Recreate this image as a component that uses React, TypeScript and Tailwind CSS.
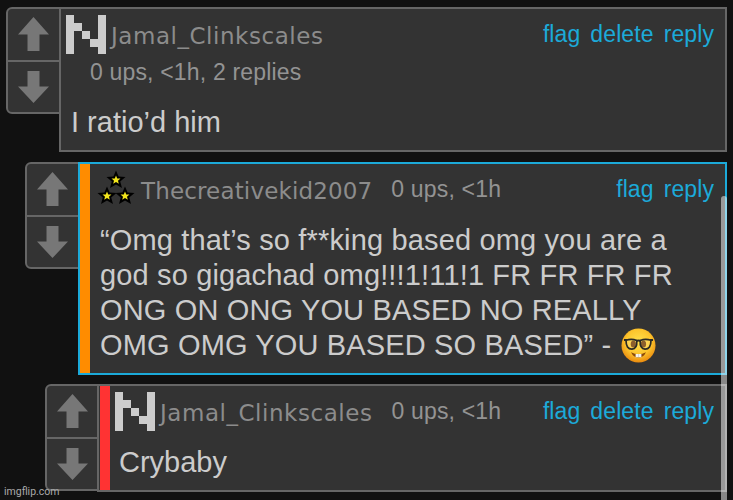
import type { ReactNode } from 'react';
import clsx from 'clsx';

const ARROW = 'M15.5 0 L31 17.5 H21.5 V34 H9.5 V17.5 H0 Z';

function VoteBox() {
  return (
    <div className="-mr-0.5 h-[107px] w-[55px] shrink-0 rounded-l-md border-2 border-[#666] bg-[#333]">
      <button className="flex h-[53px] w-full justify-center border-b-2 border-[#666] pt-2">
        <svg width="31" height="34" viewBox="0 0 31 34" fill="#777">
          <path d={ARROW} />
        </svg>
      </button>
      <button className="flex h-[50px] w-full justify-center pt-[9px]">
        <svg className="rotate-180" width="31" height="32" viewBox="0 0 31 34" preserveAspectRatio="none" fill="#777">
          <path d={ARROW} />
        </svg>
      </button>
    </div>
  );
}

function PixelIcon() {
  return (
    <svg width="40" height="39" viewBox="0 0 40 39" fill="#ccc" shapeRendering="crispEdges" className="shrink-0">
      <path d="M0 0H8V8H16V16H24V24H32V0H40V39H32V32H24V24H16V16H8V39H0Z" />
    </svg>
  );
}

function StarsIcon() {
  const star = 'M0 -9.5 L2.6 -3.4 L9.5 -3 L4.2 1.4 L6 8 L0 4.4 L-6 8 L-4.2 1.4 L-9.5 -3 L-2.6 -3.4 Z';
  const spots = [
    [17, 10],
    [8, 26],
    [26, 26],
  ];
  return (
    <svg width="36" height="36" viewBox="0 0 36 36" className="shrink-0 overflow-visible">
      {spots.map(([x, y]) => (
        <g key={x} transform={`translate(${x} ${y})`}>
          <path d={star} fill="#000" />
          <path d={star} fill="#f2e51c" transform="scale(.47)" />
        </g>
      ))}
    </svg>
  );
}

function NerdFace() {
  return (
    <svg width="35" height="35" viewBox="0 0 35 35" className="-mt-2 -mb-1 ml-[10px] inline-block align-[-4px]">
      <defs>
        <radialGradient id="face" cx=".5" cy=".4" r=".62">
          <stop offset="0" stopColor="#ffe14d" />
          <stop offset=".6" stopColor="#fcc42c" />
          <stop offset="1" stopColor="#e8850c" />
        </radialGradient>
      </defs>
      <circle cx="17.5" cy="17.5" r="17" fill="url(#face)" />
      <ellipse cx="12.3" cy="16" rx="2.6" ry="3.6" fill="#7a4308" />
      <ellipse cx="22.5" cy="16" rx="2.6" ry="3.6" fill="#7a4308" />
      <g fill="#fff" fillOpacity=".15" stroke="#2b2a25" strokeWidth="1.7">
        <path d="M5 12.3 Q10.5 10.5 15.8 12.5 Q16.3 20.8 11 21.2 Q5 21.3 5 12.3Z" />
        <path d="M30 12.3 Q24.5 10.5 19.2 12.5 Q18.7 20.8 24 21.2 Q30 21.3 30 12.3Z" />
      </g>
      <path d="M3 12 H6 M15 13 Q17.5 11.8 20 13 M29 12 H32" stroke="#2b2a25" strokeWidth="2" fill="none" />
      <path d="M10 24.2 Q17.5 28.5 25 24.2 Q22.5 29.5 17.5 29.5 Q12.5 29.5 10 24.2Z" fill="#8b4a09" />
      <path d="M14.6 26 H20.4 V29.3 H14.6Z" fill="#f6f3ea" />
      <path d="M17.5 26 V29.3" stroke="#bbb" strokeWidth=".5" />
    </svg>
  );
}

function Actions({ items }: { items: string[] }) {
  return (
    <div className="ml-auto flex gap-[10px] text-[23px] leading-7 tracking-[0.1px] text-[#1caad9]">
      {items.map((item) => (
        <a key={item}>{item}</a>
      ))}
    </div>
  );
}

function UserName({ children, className }: { children: ReactNode; className?: string }) {
  return (
    <span className={clsx("font-['DejaVu_Sans',sans-serif] text-[23px] leading-7 text-[#8c8c8c]", className)}>
      {children}
    </span>
  );
}

function Stats({ children, className }: { children: ReactNode; className?: string }) {
  return <span className={clsx('text-[23px] leading-7 tracking-[0.17px] text-[#939393]', className)}>{children}</span>;
}

export default function App() {
  return (
    <div className="relative h-[500px] w-[733px] overflow-hidden bg-[#111] pt-[7px] pr-1.5 font-['Liberation_Sans',Arial,sans-serif] whitespace-nowrap">
      <article className="flex items-start pl-1.5">
        <VoteBox />
        <div className="h-[145px] flex-1 border-2 border-[#666] bg-[#333]">
          <header className="flex h-[49px] items-start pt-[5px] pr-[11px] pl-[5px]">
            <div className="pt-px">
              <PixelIcon />
            </div>
            <UserName className="mt-2 ml-[5px] tracking-[0.54px]">Jamal_Clinkscales</UserName>
            <div className="mt-[6px] ml-auto">
              <Actions items={['flag', 'delete', 'reply']} />
            </div>
          </header>
          <Stats className="ml-[29px] block">0 ups, &lt;1h, 2 replies</Stats>
          <p className="mt-[19px] ml-2.5 text-[29px] leading-[35px] text-[#ccc]">I ratio’d him</p>
        </div>
      </article>

      <article className="mt-2.5 flex items-start pl-[25px]">
        <VoteBox />
        <div className="flex h-[213px] flex-1 border-2 border-[#1caad9] bg-[#333]">
          <div className="w-2.5 bg-[#ff8c00]" />
          <div className="flex-1">
            <header className="flex h-[59px] items-start pt-[6px] pr-[11px] pl-[9px]">
              <StarsIcon />
              <UserName className="mt-[7px] ml-[6px] tracking-[0.15px]">Thecreativekid2007</UserName>
              <Stats className="mt-[5px] ml-[19px]">0 ups, &lt;1h</Stats>
              <div className="mt-[5px] ml-auto">
                <Actions items={['flag', 'reply']} />
              </div>
            </header>
            <p className="ml-[10px] text-[29px] leading-[35px] tracking-[0.15px] text-[#ccc]">
              “Omg that’s so f**king based omg you are a
              <br />
              god so gigachad omg!!!1!11!1 FR FR FR FR
              <br />
              ONG ON ONG YOU BASED NO REALLY
              <br />
              OMG OMG YOU BASED SO BASED” -<NerdFace />
            </p>
          </div>
        </div>
      </article>

      <article className="mt-[9px] flex items-start pl-[45px]">
        <VoteBox />
        <div className="-ml-px flex h-[108px] flex-1 border-2 border-[#666] bg-[#333]">
          <div className="ml-px w-2.5 bg-[#ff3333]" />
          <div className="flex-1">
            <header className="flex h-[59px] items-start pt-[6px] pr-[11px] pl-[5px]">
              <PixelIcon />
              <UserName className="mt-[7px] ml-[5px] tracking-[0.54px]">Jamal_Clinkscales</UserName>
              <Stats className="mt-[5px] ml-[19px]">0 ups, &lt;1h</Stats>
              <div className="mt-[5px] ml-auto">
                <Actions items={['flag', 'delete', 'reply']} />
              </div>
            </header>
            <p className="ml-[9px] text-[29px] leading-[35px] text-[#ccc]">Crybaby</p>
          </div>
        </div>
      </article>

      {/* scrollbar and site credit overlay the thread */}
      <div className="absolute top-[196px] left-[721px] h-80 w-1.5 rounded-full bg-white/50" />
      <span className="absolute bottom-px left-1 font-['Roboto',sans-serif] text-[10.5px] leading-[14px] text-[#aaa]">imgflip.com</span>
    </div>
  );
}
